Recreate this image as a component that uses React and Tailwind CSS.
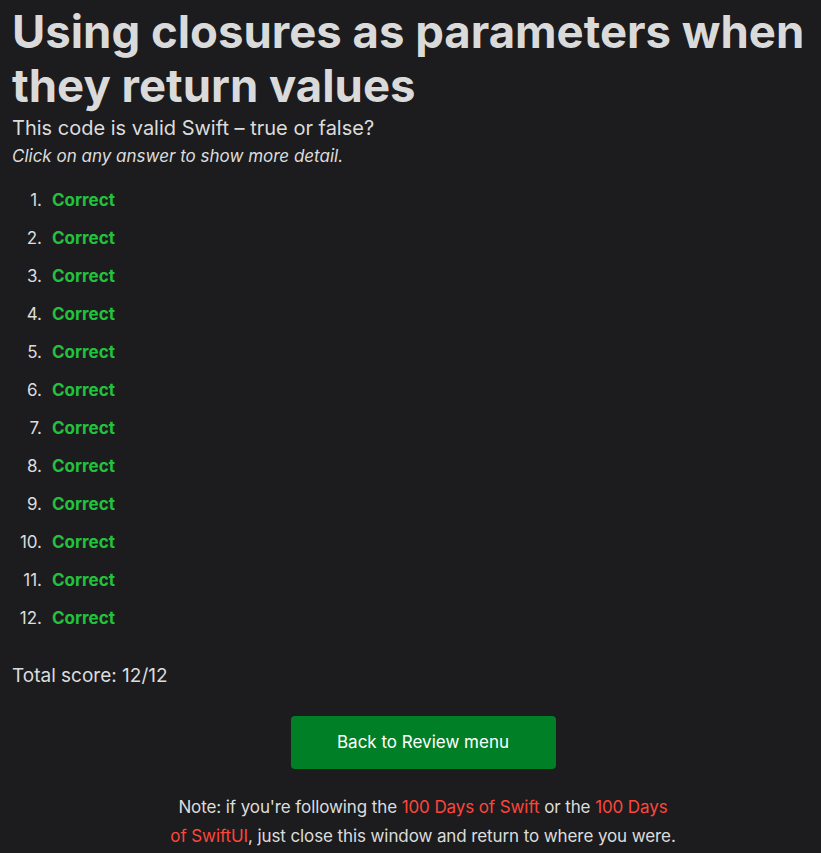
import React from 'react';

const answers = Array.from({ length: 12 }, (_, i) => i + 1);

const App = () => {
  return (
    <div
      className="min-h-screen bg-[#1c1c1e] text-[#dcdcdc] px-[12px] pb-4"
      style={{ fontFamily: 'Inter, "Noto Sans", sans-serif' }}
    >
      <h1 className="-mr-[12px] pt-[5px] text-[45.5px] font-bold leading-[54px] text-[#dadada]">
        Using closures as parameters when they return values
      </h1>
      <p className="mt-[3px] text-[20px] leading-[24px]">This code is valid Swift – true or false?</p>
      <p className="mt-1 text-[17px] italic leading-[24px]">Click on any answer to show more detail.</p>

      <ol className="mt-[19px] text-[17px]">
        {answers.map((n) => (
          <li key={n} className="mb-3 flex leading-[26px] last:mb-0">
            <span className="w-[30px] text-right">{n}.</span>
            <span className="ml-[10px] cursor-pointer font-bold text-[#22c33c]">Correct</span>
          </li>
        ))}
      </ol>

      <p className="mt-[33px] text-[19px] leading-[24px]">Total score: 12/12</p>

      <div className="mt-[28px] flex justify-center pl-[25px]">
        <button className="h-[53px] w-[265px] rounded-[4px] bg-[#007f27] text-[17px] text-white">
          Back to Review menu
        </button>
      </div>

      <div className="mt-[24px] flex justify-center pl-[25px]">
        <p className="max-w-[508px] text-center text-[17px] leading-[29px] tracking-[-0.1px]">
          Note: if you're following the <a className="text-[#ff453a]">100 Days of Swift</a> or the{' '}
          <a className="text-[#ff453a]">100 Days of SwiftUI</a>, just close this window and return to where you were.
        </p>
      </div>
    </div>
  );
};

export default App;
